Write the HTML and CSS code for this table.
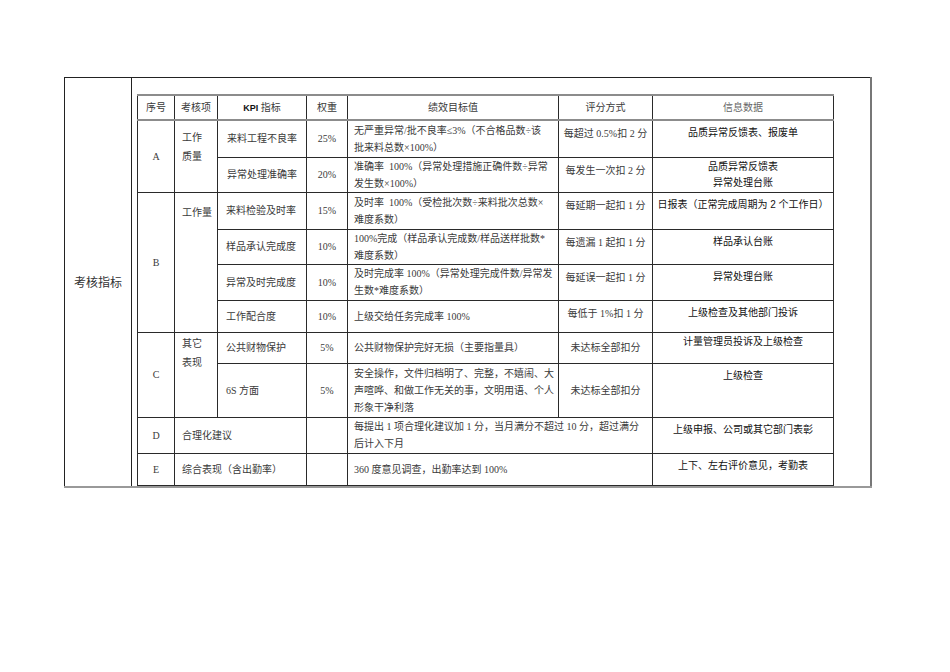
FILE: index.html
```html
<!DOCTYPE html>
<html lang="zh-CN">
<head>
<meta charset="utf-8">
<title>考核指标</title>
<link rel="stylesheet" href="styles.css">
</head>
<body>
<div class="page">
  <table class="outer">
    <tr>
      <td class="outer-label">考核指标</td>
      <td class="outer-content">
        <table class="kpi">
          <colgroup>
            <col class="c-no"><col class="c-item"><col class="c-kpi"><col class="c-wt"><col class="c-target"><col class="c-score"><col class="c-info">
          </colgroup>
          <tr class="h-head">
            <th>序号</th>
            <th>考核项</th>
            <th><b class="kpi-b">KPI</b> 指标</th>
            <th>权重</th>
            <th>绩效目标值</th>
            <th>评分方式</th>
            <th class="th-info">信息数据</th>
          </tr>
          <tr class="h-a1">
            <td class="no" rowspan="2">A</td>
            <td class="item item-mid" rowspan="2">工作<br>质量</td>
            <td class="kpi-c center">来料工程不良率</td>
            <td class="wt">25%</td>
            <td class="target">无严重异常/批不良率≤3%（不合格品数÷该<br>批来料总数×100%）</td>
            <td class="score top">每超过 0.5%扣 2 分</td>
            <td class="info">品质异常反馈表、报废单</td>
          </tr>
          <tr class="h-a2">
            <td class="kpi-c center">异常处理准确率</td>
            <td class="wt">20%</td>
            <td class="target">准确率&nbsp; 100%（异常处理措施正确件数÷异常<br>发生数×100%）</td>
            <td class="score top">每发生一次扣 2 分</td>
            <td class="info info-two">品质异常反馈表<br>异常处理台账</td>
          </tr>
          <tr class="h-b1">
            <td class="no" rowspan="4">B</td>
            <td class="item item-top" rowspan="4">工作量</td>
            <td class="kpi-c">来料检验及时率</td>
            <td class="wt">15%</td>
            <td class="target">及时率&nbsp; 100%（受检批次数÷来料批次总数×<br>难度系数）</td>
            <td class="score top">每延期一起扣 1 分</td>
            <td class="info">日报表（正常完成周期为 2 个工作日）</td>
          </tr>
          <tr class="h-b2">
            <td class="kpi-c">样品承认完成度</td>
            <td class="wt">10%</td>
            <td class="target">100%完成（样品承认完成数/样品送样批数*<br>难度系数）</td>
            <td class="score top">每遗漏 1 起扣 1 分</td>
            <td class="info">样品承认台账</td>
          </tr>
          <tr class="h-b3">
            <td class="kpi-c">异常及时完成度</td>
            <td class="wt">10%</td>
            <td class="target">及时完成率 100%（异常处理完成件数/异常发<br>生数*难度系数）</td>
            <td class="score top">每延误一起扣 1 分</td>
            <td class="info">异常处理台账</td>
          </tr>
          <tr class="h-b4">
            <td class="kpi-c">工作配合度</td>
            <td class="wt">10%</td>
            <td class="target">上级交给任务完成率 100%</td>
            <td class="score top">每低于 1%扣 1 分</td>
            <td class="info">上级检查及其他部门投诉</td>
          </tr>
          <tr class="h-c1">
            <td class="no" rowspan="2">C</td>
            <td class="item item-top2" rowspan="2">其它<br>表现</td>
            <td class="kpi-c">公共财物保护</td>
            <td class="wt">5%</td>
            <td class="target">公共财物保护完好无损（主要指量具）</td>
            <td class="score">未达标全部扣分</td>
            <td class="info info-tight">计量管理员投诉及上级检查</td>
          </tr>
          <tr class="h-c2">
            <td class="kpi-c">6S 方面</td>
            <td class="wt">5%</td>
            <td class="target target-three">安全操作，文件归档明了、完整，不嬉闹、大<br>声喧哗、和做工作无关的事，文明用语、个人<br>形象干净利落</td>
            <td class="score">未达标全部扣分</td>
            <td class="info">上级检查</td>
          </tr>
          <tr class="h-d">
            <td class="no">D</td>
            <td class="item-wide" colspan="2">合理化建议</td>
            <td class="wt"></td>
            <td class="target" colspan="2">每提出 1 项合理化建议加 1 分，当月满分不超过 10 分，超过满分<br>后计入下月</td>
            <td class="info">上级申报、公司或其它部门表彰</td>
          </tr>
          <tr class="h-e">
            <td class="no">E</td>
            <td class="item-wide" colspan="2">综合表现（含出勤率）</td>
            <td class="wt"></td>
            <td class="target" colspan="2">360 度意见调查，出勤率达到 100%</td>
            <td class="info">上下、左右评价意见，考勤表</td>
          </tr>
        </table>
      </td>
    </tr>
  </table>
</div>
</body>
</html>
```

FILE: styles.css
```css
html, body {
  margin: 0;
  padding: 0;
  background: #ffffff;
}

body {
  font-family: "Liberation Serif", "Noto Sans CJK SC", serif;
  font-size: 10px;
  color: #3a3a3a;
}

.page {
  padding: 77px 0 0 64px;
}

.outer {
  border-collapse: collapse;
  table-layout: fixed;
  width: 808px;
  border-top: 1px solid #222;
  border-left: 1px solid #222;
  border-right: 2px solid #777;
  border-bottom: 2px solid #999;
}

.outer td {
  padding: 0;
}

.outer-label {
  width: 66px;
  border-right: 1px solid #222;
  text-align: center;
  vertical-align: middle;
  font-size: 12px;
  color: #333;
  padding-left: 1px;
}

.outer-content {
  vertical-align: top;
  padding: 16px 0 0 5px !important;
}

.kpi {
  border-collapse: collapse;
  table-layout: fixed;
  width: 696px;
  line-height: 17px;
}

.kpi th,
.kpi td {
  border: 1px solid #2a2a2a;
  padding: 0;
  font-weight: normal;
  overflow: hidden;
}

.kpi tr:first-child th {
  border-top: 2px solid #8c8c8c;
  border-bottom: 2px solid #8c8c8c;
}

.c-no { width: 37px; }
.c-item { width: 43px; }
.c-kpi { width: 89px; }
.c-wt { width: 41px; }
.c-target { width: 211px; }
.c-score { width: 94px; }
.c-info { width: 181px; }

.h-head { height: 25px; }
.h-a1 { height: 37px; }
.h-a2 { height: 34px; }
.h-b1 { height: 37px; }
.h-b2 { height: 35px; }
.h-b3 { height: 36px; }
.h-b4 { height: 32px; }
.h-c1 { height: 31px; }
.h-c2 { height: 54px; }
.h-d { height: 36px; }
.h-e { height: 32px; }

.kpi th {
  text-align: center;
  vertical-align: middle;
  color: #3a3a3a;
}

.kpi-b {
  font-family: "Liberation Sans", "Noto Sans CJK SC", sans-serif;
  font-weight: bold;
  font-size: 9px;
  color: #111;
}

.th-info {
  color: #666 !important;
}

.no {
  text-align: center;
  vertical-align: middle;
}

.item {
  text-align: left;
  padding-left: 7px !important;
  line-height: 19px;
}

.item-mid {
  vertical-align: top;
  padding-top: 7px !important;
}

.item-top {
  vertical-align: top;
  padding-top: 10px !important;
}

.item-top2 {
  vertical-align: top;
  padding-top: 1px !important;
}

.item-wide {
  text-align: left;
  vertical-align: middle;
  padding-left: 7px !important;
}

.kpi-c {
  text-align: left;
  vertical-align: middle;
  padding-left: 8px !important;
  white-space: nowrap;
}

.kpi-c.center {
  text-align: center;
  padding-left: 0 !important;
}

.wt {
  text-align: center;
  vertical-align: middle;
}

.target {
  text-align: left;
  vertical-align: middle;
  padding-left: 6px !important;
  white-space: nowrap;
}

.target-three {
  line-height: 17px;
}

.score {
  text-align: center;
  vertical-align: middle;
  white-space: nowrap;
}

.score.top {
  vertical-align: top;
  padding-top: 4px !important;
}

.info {
  font-family: "Liberation Sans", "Noto Sans CJK SC", sans-serif;
  text-align: center;
  vertical-align: top;
  padding-top: 4px !important;
  color: #111;
  line-height: 16px;
  white-space: nowrap;
}

.info-two {
  padding-top: 1px !important;
}

.info-tight {
  padding-top: 1px !important;
}
```
